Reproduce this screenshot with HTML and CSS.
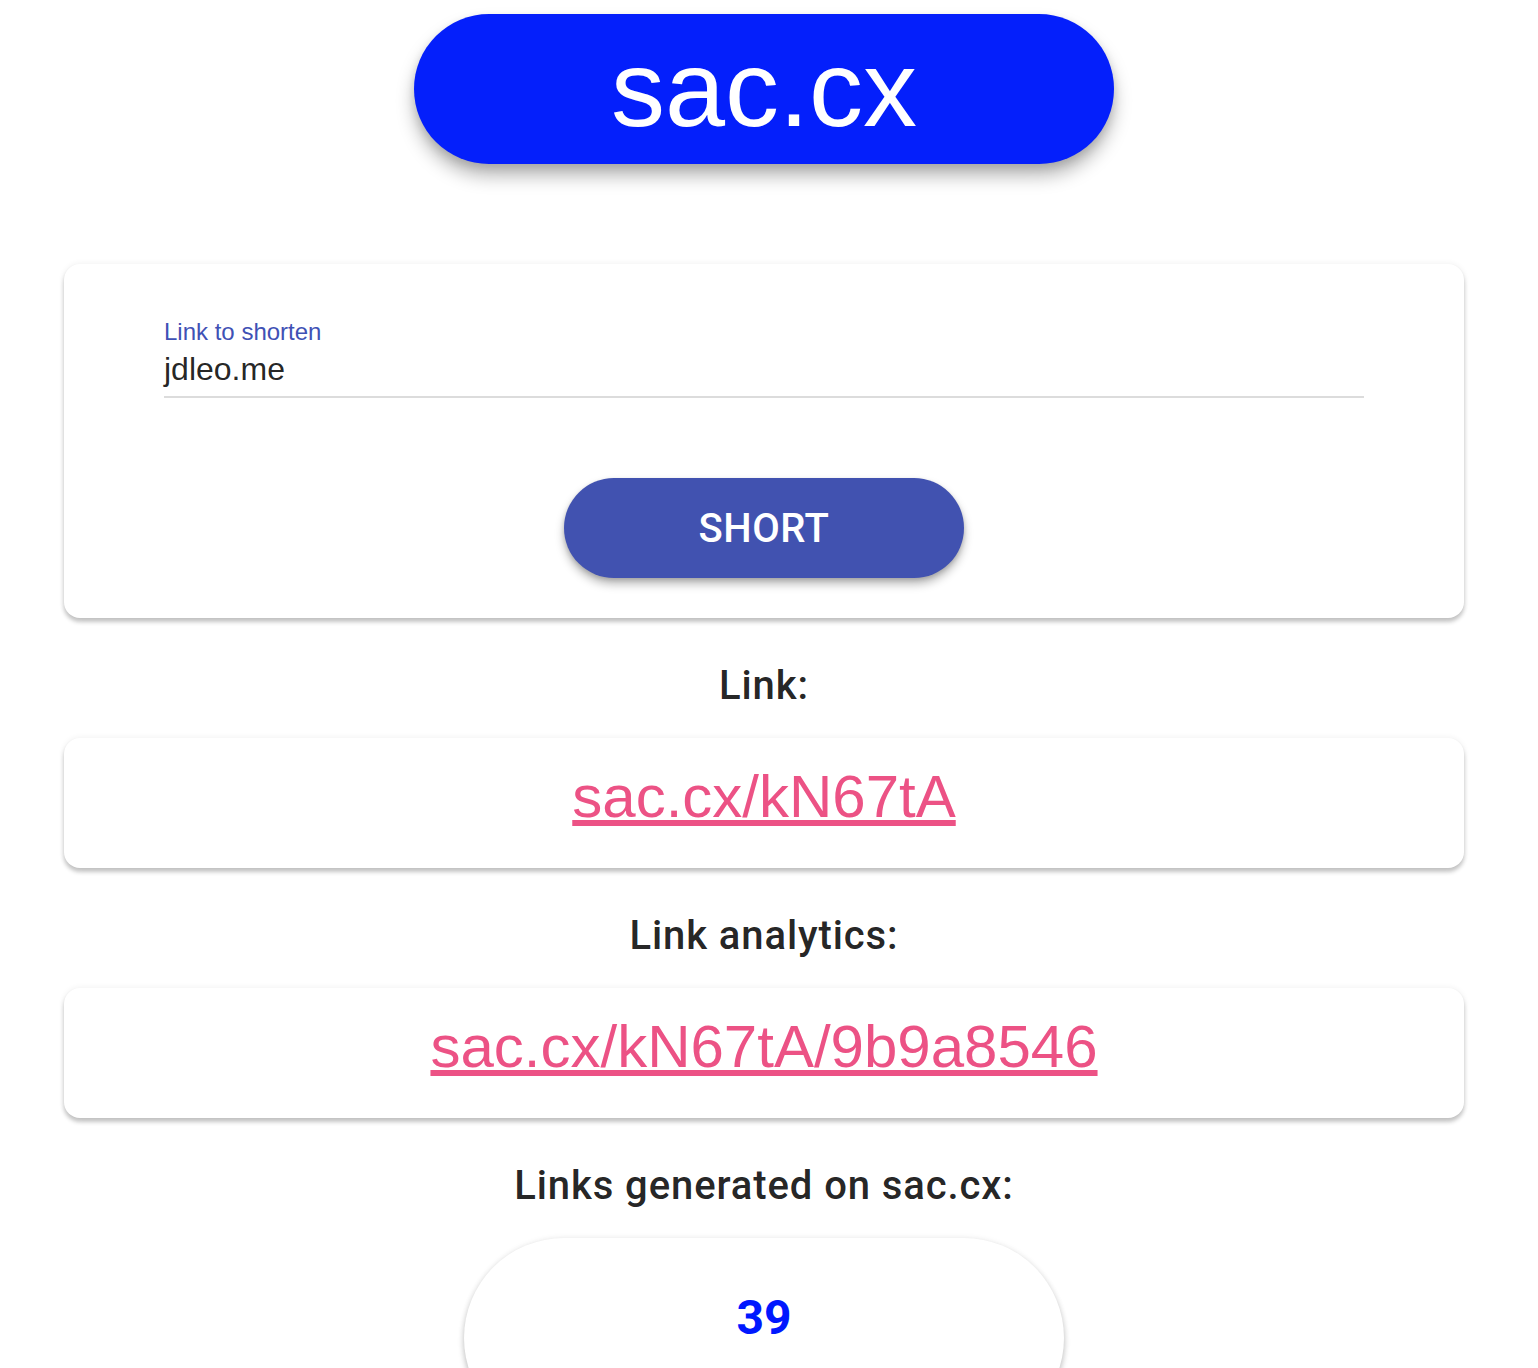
FILE: index.html
```html
<!DOCTYPE html>
<html lang="en">
<head>
<meta charset="utf-8">
<title>sac.cx</title>
<link rel="stylesheet" href="styles.css">
</head>
<body>
<div class="page">
  <header class="brand">sac.cx</header>

  <section class="card form-card">
    <label class="field">
      <span class="field-label">Link to shorten</span>
      <span class="field-input">jdleo.me</span>
    </label>
    <div class="actions">
      <button class="short-btn" type="button">SHORT</button>
    </div>
  </section>

  <h2 class="heading">Link:</h2>
  <section class="card link-card">
    <a class="result-link" href="#">sac.cx/kN67tA</a>
  </section>

  <h2 class="heading">Link analytics:</h2>
  <section class="card link-card">
    <a class="result-link" href="#">sac.cx/kN67tA/9b9a8546</a>
  </section>

  <h2 class="heading">Links generated on sac.cx:</h2>
  <div class="count-pill">39</div>
</div>
</body>
</html>
```

FILE: styles.css
```css
html, body {
  margin: 0;
  padding: 0;
  overflow: hidden;
  background: #ffffff;
}

body {
  font-family: "Liberation Sans", Arial, sans-serif;
}

.page {
  width: 1400px;
  margin-left: 64px;
  padding-top: 14px;
  display: flex;
  flex-direction: column;
  align-items: center;
}

.brand {
  width: 700px;
  height: 150px;
  border-radius: 75px;
  background: #041ffb;
  color: #ffffff;
  font-family: "Liberation Sans", Arial, sans-serif;
  font-size: 108px;
  line-height: 150px;
  text-align: center;
  box-shadow: 0 12px 18px rgba(0, 0, 0, 0.28), 0 4px 8px rgba(0, 0, 0, 0.12);
}

.card {
  width: 100%;
  box-sizing: border-box;
  background: #ffffff;
  border-radius: 16px;
  box-shadow: 0 4px 4px rgba(0, 0, 0, 0.22), 0 0 6px rgba(0, 0, 0, 0.07);
}

.form-card {
  margin-top: 100px;
  padding: 54px 100px 40px;
  display: flex;
  flex-direction: column;
}

.field {
  display: flex;
  flex-direction: column;
  border-bottom: 2px solid #dcdcdc;
  padding-bottom: 7px;
}

.field-label {
  color: #3f51b5;
  font-size: 24px;
  line-height: 28px;
}

.field-input {
  margin-top: 3px;
  color: rgba(0, 0, 0, 0.87);
  font-size: 32px;
  line-height: 40px;
}

.actions {
  display: flex;
  justify-content: center;
  margin-top: 80px;
}

.short-btn {
  width: 400px;
  height: 100px;
  border: none;
  border-radius: 50px;
  background: #4152b0;
  color: #ffffff;
  font-family: Roboto, "Liberation Sans", sans-serif;
  font-weight: 500;
  font-size: 40px;
  letter-spacing: 0.5px;
  box-shadow: 0 6px 10px rgba(0, 0, 0, 0.28), 0 2px 4px rgba(0, 0, 0, 0.14);
}

.heading {
  margin: 40px 0 24px;
  font-family: Roboto, "Liberation Sans", sans-serif;
  font-weight: 500;
  font-size: 40px;
  line-height: 56px;
  letter-spacing: 0.9px;
  color: rgba(0, 0, 0, 0.87);
  text-align: center;
}

.link-card {
  height: 130px;
  padding: 24px 0 36px;
  text-align: center;
}

.result-link {
  color: #ec5285;
  font-size: 60px;
  line-height: 70px;
  text-decoration: underline;
}

.count-pill {
  width: 600px;
  height: 200px;
  box-sizing: border-box;
  padding-top: 50px;
  border-radius: 100px;
  background: #ffffff;
  box-shadow: 0 4px 6px rgba(0, 0, 0, 0.22), 0 0 6px rgba(0, 0, 0, 0.07);
  text-align: center;
  font-family: Roboto, "Liberation Sans", sans-serif;
  font-weight: 700;
  font-size: 48px;
  line-height: 60px;
  color: #0018ff;
}
```
